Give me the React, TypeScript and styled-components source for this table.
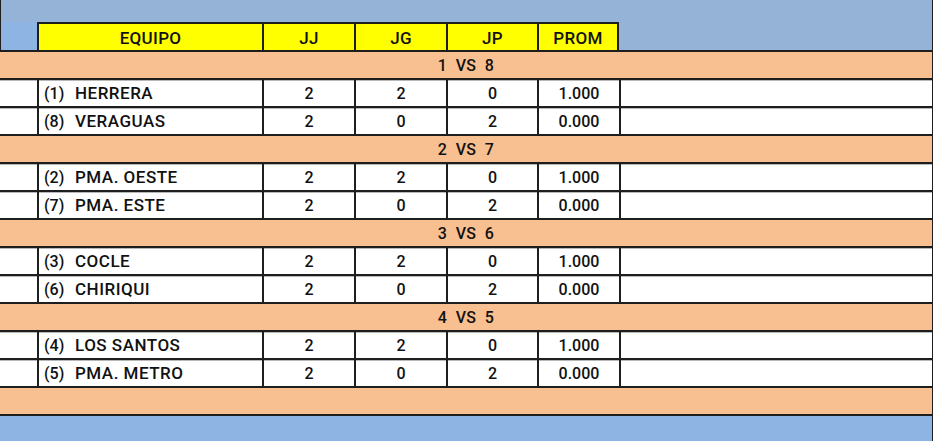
import React from "react";
import styled, { createGlobalStyle } from "styled-components";

const Global = createGlobalStyle`
  html, body { margin: 0; padding: 0; background: #ffffff; }
  body { font-family: Roboto, "Noto Sans", sans-serif; }
`;

const COLS = "37px 225px 92px 92px 91px 82px 1fr";
const LINE = "#1e1e1e";
const PEACH = "#F8C090";
const TOP_BLUE = "#95B3D7";
const SIDE_BLUE = "#8DB4E2";

const Sheet = styled.div`
  width: 933px;
  height: 441px;
  box-sizing: border-box;
  border-right: 1px solid ${LINE};
  display: flex;
  flex-direction: column;
  overflow: hidden;
  color: #111;
  font-family: Roboto, "Noto Sans", sans-serif;
  font-weight: 500;
  font-size: 16px;
`;

const TopBand = styled.div`
  height: 22px;
  flex: none;
  background: ${TOP_BLUE};
  border-left: 1px solid ${LINE};
`;

const HeaderRow = styled.div`
  height: 28px;
  flex: none;
  display: grid;
  grid-template-columns: ${COLS};
  background: ${TOP_BLUE};
`;

const SideCell = styled.div`
  background: ${SIDE_BLUE};
  border-left: 1px solid ${LINE};
`;

const HeadCell = styled.div<{ $last?: boolean }>`
  box-sizing: border-box;
  background: #ffff00;
  border-top: 2px solid ${LINE};
  border-left: 2px solid ${LINE};
  ${(p) => (p.$last ? `border-right: 2px solid ${LINE};` : "")}
  display: flex;
  align-items: center;
  justify-content: center;
  padding-top: 1px;
  font-size: 17px;
  letter-spacing: 0.3px;
`;

const GroupRow = styled.div`
  height: 28px;
  flex: none;
  box-sizing: border-box;
  background: ${PEACH};
  border-top: 2px solid ${LINE};
  display: flex;
  align-items: center;
  justify-content: center;
  white-space: pre;
  padding-top: 1px;
  letter-spacing: 0.3px;
`;

const TeamRow = styled.div`
  height: 28px;
  flex: none;
  box-sizing: border-box;
  display: grid;
  grid-template-columns: ${COLS};
  background: #ffffff;
  border-top: 2px solid ${LINE};
  box-shadow: inset 0 1px 0 #b8b8b8;
`;

const Cell = styled.div<{ $edge?: boolean }>`
  box-sizing: border-box;
  border-left: ${(p) => (p.$edge ? "none" : `2px solid ${LINE}`)};
  display: flex;
  align-items: center;
  justify-content: center;
  padding-top: 1px;
`;

const NameCell = styled(Cell)`
  justify-content: flex-start;
  padding-left: 5px;
`;

const Label = styled.span`
  line-height: 20px;
  white-space: nowrap;
`;

const Seed = styled.span`
  display: inline-block;
  width: 31px;
`;

const Name = styled.span`
  font-size: 17px;
  letter-spacing: 0.5px;
`;

const BottomBand = styled.div`
  flex: 1;
  background: ${SIDE_BLUE};
  border-top: 2px solid ${LINE};
`;

type Team = { seed: number; name: string; jj: number; jg: number; jp: number; prom: string };

const matchups: { label: string; teams: Team[] }[] = [
  {
    label: "1  VS  8",
    teams: [
      { seed: 1, name: "HERRERA", jj: 2, jg: 2, jp: 0, prom: "1.000" },
      { seed: 8, name: "VERAGUAS", jj: 2, jg: 0, jp: 2, prom: "0.000" },
    ],
  },
  {
    label: "2  VS  7",
    teams: [
      { seed: 2, name: "PMA. OESTE", jj: 2, jg: 2, jp: 0, prom: "1.000" },
      { seed: 7, name: "PMA. ESTE", jj: 2, jg: 0, jp: 2, prom: "0.000" },
    ],
  },
  {
    label: "3  VS  6",
    teams: [
      { seed: 3, name: "COCLE", jj: 2, jg: 2, jp: 0, prom: "1.000" },
      { seed: 6, name: "CHIRIQUI", jj: 2, jg: 0, jp: 2, prom: "0.000" },
    ],
  },
  {
    label: "4  VS  5",
    teams: [
      { seed: 4, name: "LOS SANTOS", jj: 2, jg: 2, jp: 0, prom: "1.000" },
      { seed: 5, name: "PMA. METRO", jj: 2, jg: 0, jp: 2, prom: "0.000" },
    ],
  },
];

export default function App() {
  return (
    <>
      <Global />
      <Sheet>
        <TopBand />
        <HeaderRow>
          <SideCell />
          <HeadCell>EQUIPO</HeadCell>
          <HeadCell>JJ</HeadCell>
          <HeadCell>JG</HeadCell>
          <HeadCell>JP</HeadCell>
          <HeadCell $last>PROM</HeadCell>
          <div />
        </HeaderRow>
        {matchups.map((m) => (
          <React.Fragment key={m.label}>
            <GroupRow>{m.label}</GroupRow>
            {m.teams.map((t) => (
              <TeamRow key={t.seed}>
                <Cell $edge />
                <NameCell>
                  <Label>
                    <Seed>({t.seed})</Seed>
                    <Name>{t.name}</Name>
                  </Label>
                </NameCell>
                <Cell>{t.jj}</Cell>
                <Cell>{t.jg}</Cell>
                <Cell>{t.jp}</Cell>
                <Cell>{t.prom}</Cell>
                <Cell />
              </TeamRow>
            ))}
          </React.Fragment>
        ))}
        <GroupRow />
        <BottomBand />
      </Sheet>
    </>
  );
}
